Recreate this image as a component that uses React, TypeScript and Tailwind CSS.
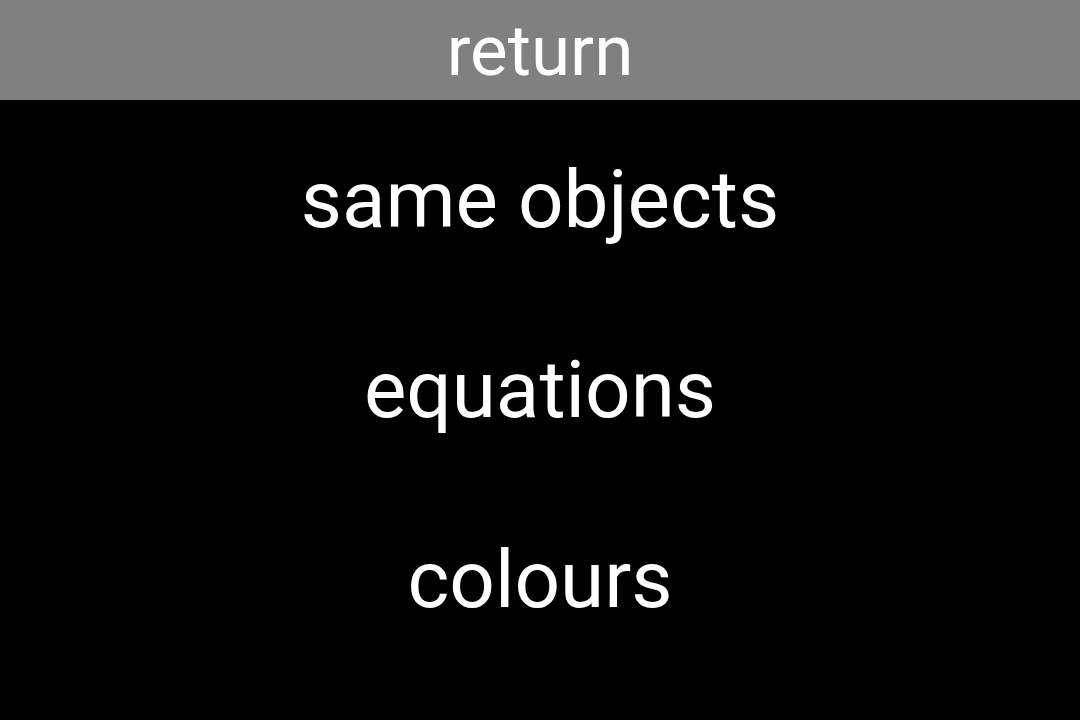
const items = ["same objects", "equations", "colours"];

export default function App() {
  return (
    <div className="w-[1080px] h-[720px] bg-black flex flex-col font-['Roboto',sans-serif] text-white">
      <div className="h-[100px] bg-[#808080] flex items-center justify-center text-[71px] leading-none">
        return
      </div>
      <div className="flex flex-col pt-[5px]">
        {items.map((item) => (
          <div key={item} className="h-[190px] flex items-center justify-center text-[80px] leading-none">
            {item}
          </div>
        ))}
      </div>
    </div>
  );
}
